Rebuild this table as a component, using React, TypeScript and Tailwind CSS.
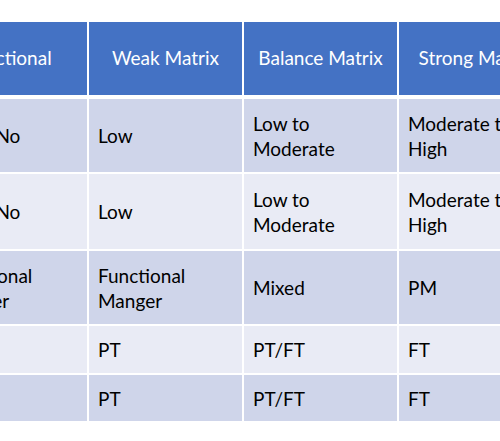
const headers = ["Functional", "Weak Matrix", "Balance Matrix", "Strong Matrix"];

// each cell is a list of lines
const rows: { h: string; bg: string; cells: string[][] }[] = [
  {
    h: "h-[73px]",
    bg: "bg-[#cfd5ea]",
    cells: [["Little/No"], ["Low"], ["Low to", "Moderate"], ["Moderate to", "High"]],
  },
  {
    h: "h-[75px]",
    bg: "bg-[#e9ebf5]",
    cells: [["Little/No"], ["Low"], ["Low to", "Moderate"], ["Moderate to", "High"]],
  },
  {
    h: "h-[73px]",
    bg: "bg-[#cfd5ea]",
    cells: [["Functional", "Manger"], ["Functional", "Manger"], ["Mixed"], ["PM"]],
  },
  {
    h: "h-[47px]",
    bg: "bg-[#e9ebf5]",
    cells: [["PT"], ["PT"], ["PT/FT"], ["FT"]],
  },
  {
    h: "h-[46px]",
    bg: "bg-[#cfd5ea]",
    cells: [["PT"], ["PT"], ["PT/FT"], ["FT"]],
  },
];

const cols = "grid grid-cols-[158px_153px_153px_153px] gap-x-[2px]";

export default function App() {
  return (
    <div
      className="w-[500px] h-[441px] overflow-hidden bg-white pt-[22px]"
      style={{ fontFamily: "Lato, 'Open Sans', sans-serif" }}
    >
      <div className="ml-[-71px] w-[623px] flex flex-col gap-y-[2px]">
        <div className={`${cols} h-[73px] mb-[2px]`}>
          {headers.map((h) => (
            <div
              key={h}
              className="bg-[#4472c4] text-white text-[19px] flex items-center justify-center"
            >
              {h}
            </div>
          ))}
        </div>
        {rows.map((row, i) => (
          <div key={i} className={`${cols} ${row.h}`}>
            {row.cells.map((lines, j) => (
              <div
                key={j}
                className={`${row.bg} ${j === 0 ? "pl-[16px]" : "pl-[9px]"} pr-[9px] flex flex-col justify-center text-[19px] leading-[25px] text-black whitespace-nowrap`}
              >
                {lines.map((l) => (
                  <span key={l}>{l}</span>
                ))}
              </div>
            ))}
          </div>
        ))}
      </div>
    </div>
  );
}
